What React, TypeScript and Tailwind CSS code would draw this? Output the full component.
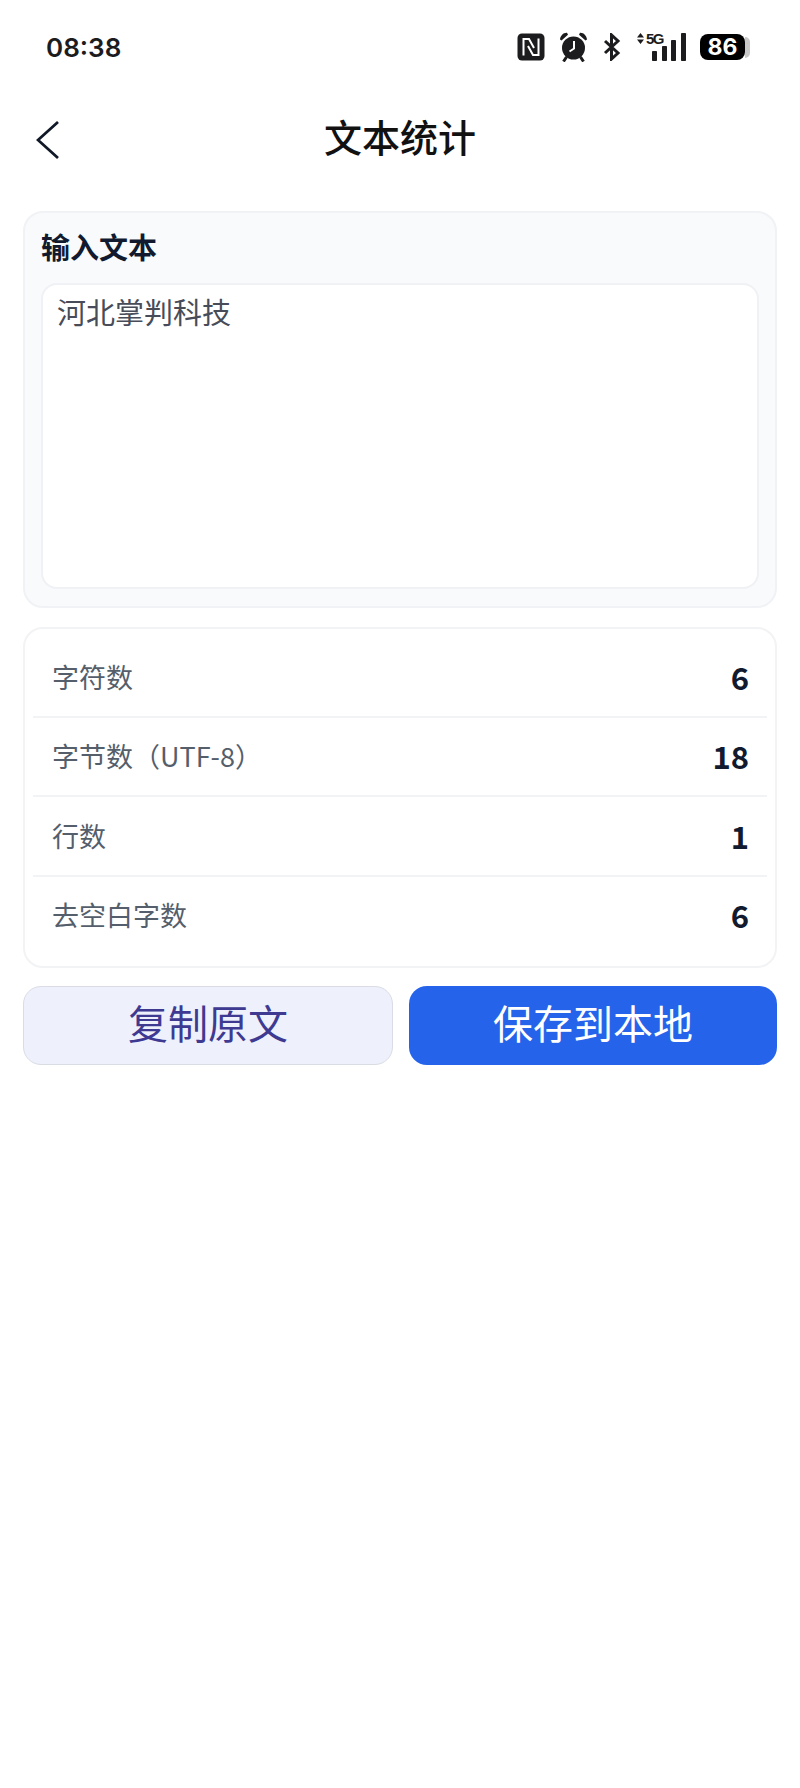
import React from 'react';

const cjk = "font-['Noto_Sans_CJK_SC','Noto_Sans',sans-serif]";

const stats = [
  { label: '字符数', value: '6' },
  { label: '字节数（UTF-8）', value: '18' },
  { label: '行数', value: '1' },
  { label: '去空白字数', value: '6' },
];

const StatusIcons = () => (
  <div className="flex items-center">
    <svg width="28" height="28" viewBox="0 0 28 28">
      <rect x="0.500" y="0.500" width="27" height="27" rx="4.500" fill="#1c1c1e" />
      <path d="M6.500 22.500V6h5.500l5 9M21.500 5.500V22h-5.500l-5-9" stroke="#fff" strokeWidth="2" fill="none" />
    </svg>
    <svg className="ml-[14px]" width="29" height="30" viewBox="0 0 29 30">
      <circle cx="14.500" cy="16" r="11.500" fill="#1c1c1e" />
      <path d="M15 9v7.500l-4.500 3" stroke="#fff" strokeWidth="2" fill="none" />
      <path d="M1 7.500C1.500 3.500 4.500 0.500 8 0.800l1 2L2.500 8.500zM28 7.500C27.500 3.500 24.500 0.500 21 0.800l-1 2 6.500 5.700z" fill="#1c1c1e" />
      <path d="M7.500 25l-3 4.500M21.500 25l3 4.500" stroke="#1c1c1e" strokeWidth="3" />
    </svg>
    <svg className="ml-[15px]" width="18" height="28" viewBox="0 0 18 28">
      <path d="M2 8l13 12-6.500 6V2L15 8 2 20" stroke="#1c1c1e" strokeWidth="3" fill="none" />
    </svg>
    <div className="relative ml-[15px] w-[51px] h-[28px]">
      <svg className="absolute left-0 top-0" width="51" height="28" viewBox="0 0 51 28">
        <path d="M1 4.500L4.500 0 8 4.500zM1 6.500L4.500 11 8 6.500z" fill="#1c1c1e" />
        <rect x="16" y="18" width="5" height="10" rx="0.800" fill="#1c1c1e" />
        <rect x="26" y="13" width="5" height="15" rx="0.800" fill="#1c1c1e" />
        <rect x="35" y="7" width="5" height="21" rx="0.800" fill="#1c1c1e" />
        <rect x="45" y="0" width="5" height="28" rx="0.800" fill="#1c1c1e" />
      </svg>
      <span className="absolute left-[10px] top-[-2px] text-[15px] leading-[16px] font-bold text-[#1c1c1e] font-['Liberation_Sans',sans-serif] tracking-[-1.500px]">5G</span>
    </div>
    <div className="ml-[13px] flex items-center">
      <div className="w-[45px] h-[26px] rounded-[8px] bg-black text-white text-[23px] leading-[26px] font-bold text-center font-['Inter',sans-serif]">86</div>
      <div className="w-[5px] h-[21px] bg-[#c8c8c8] rounded-r-[5px]" />
    </div>
  </div>
);

export default function App() {
  return (
    <div className={`w-[800px] h-[1788px] bg-white ${cjk}`}>
      <div className="h-[94px] pl-[46px] pr-[50px] flex items-center justify-between">
        <span className="text-[26px] font-semibold text-[#1c1c1e] font-['Inter',sans-serif] pt-[1px]">08:38</span>
        <StatusIcons />
      </div>

      <div className="relative h-[92px] flex items-center justify-center">
        <svg className="absolute left-[36px] top-[26px]" width="24" height="40" viewBox="0 0 24 40">
          <path d="M22 2L2 20l20 18" stroke="#111827" strokeWidth="2.800" fill="none" />
        </svg>
        <h1 className="text-[38px] leading-[50px] pb-[9px] font-medium text-[#111111]">文本统计</h1>
      </div>

      <div className="mt-[25px] px-[23px] flex flex-col gap-[19px]">
        <div className="h-[397px] rounded-[20px] border-2 border-[#f0f2f5] bg-[#f8fafc] px-[16px] pt-[13px]">
          <div className="text-[29px] leading-[40px] font-bold text-[#111a2e]">输入文本</div>
          <div className="mt-[17px] h-[306px] rounded-[16px] border-2 border-[#eff1f4] bg-white px-[14px] pt-[6px] text-[29px] leading-[40px] text-[#474c58]">
            河北掌判科技
          </div>
        </div>

        <div className="h-[341px] rounded-[20px] border-2 border-[#f2f3f5] bg-white px-[8px] pt-[9px] pb-[10px] flex flex-col">
          {stats.map((s, i) => (
            <div
              key={s.label}
              className={`flex-1 flex items-center justify-between pl-[19px] pr-[18px] border-b-2 ${i < stats.length - 1 ? 'border-[#f1f3f5]' : 'border-transparent'}`}
            >
              <span className="text-[27px] text-[#555e6b]">{s.label}</span>
              <span className="text-[31px] font-bold text-[#111a2e]">{s.value}</span>
            </div>
          ))}
        </div>
      </div>

      <div className="mt-[18px] px-[23px] flex gap-[16px]">
        <button className="flex-1 h-[79px] pb-[8px] rounded-[18px] border border-[#d9dce4] bg-[#eef1fc] text-[40px] text-[#3e3a92]">复制原文</button>
        <button className="flex-1 h-[79px] pb-[8px] rounded-[18px] bg-[#2563eb] text-[40px] text-white">保存到本地</button>
      </div>
    </div>
  );
}
